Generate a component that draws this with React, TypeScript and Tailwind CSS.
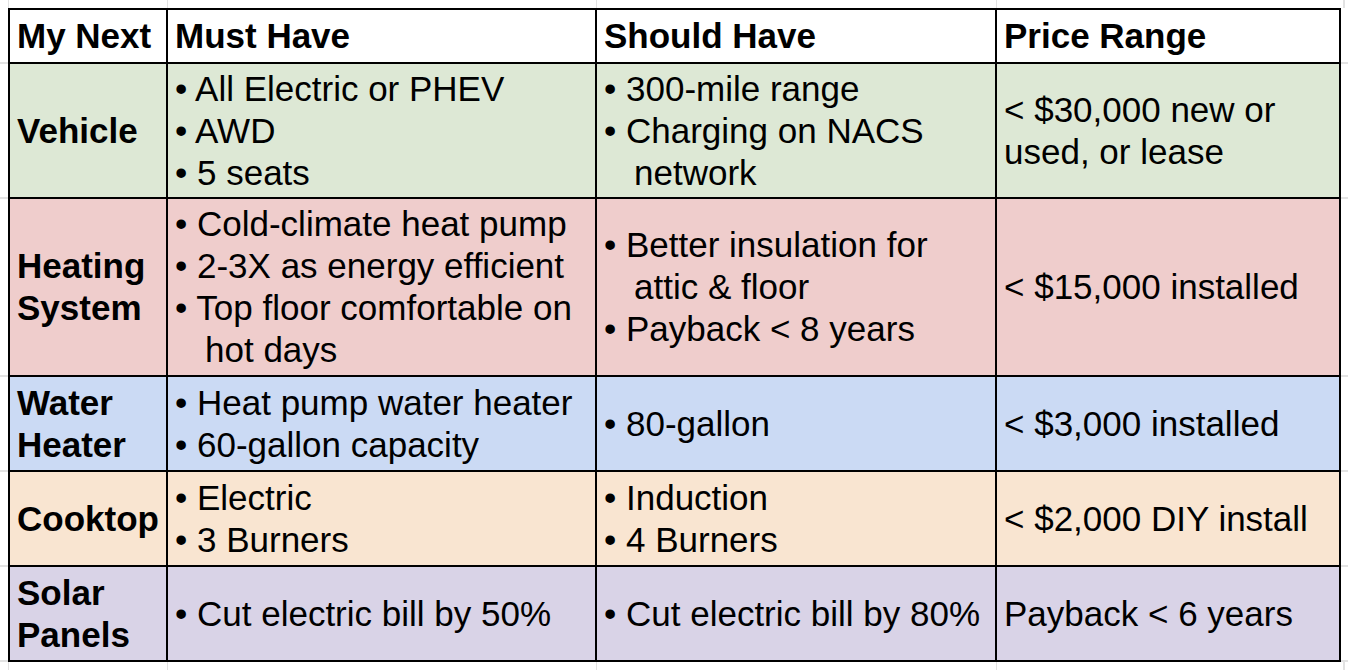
import React from 'react';

type Row = {
  name: string[];
  bg: string;
  must: string[][];
  should: string[][];
  price: string[];
  h: string;
};

// each bullet is a list of lines; lines after the first are wrapped and indented
const rows: Row[] = [
  {
    name: ['Vehicle'],
    bg: 'bg-[#dde8d5]',
    must: [['All Electric or PHEV'], ['AWD'], ['5 seats']],
    should: [['300-mile range'], ['Charging on NACS', 'network']],
    price: ['< $30,000 new or', 'used, or lease'],
    h: 'h-[135px]',
  },
  {
    name: ['Heating', 'System'],
    bg: 'bg-[#efcdcc]',
    must: [['Cold-climate heat pump'], ['2-3X as energy efficient'], ['Top floor comfortable on', 'hot days']],
    should: [['Better insulation for', 'attic & floor'], ['Payback < 8 years']],
    price: ['< $15,000 installed'],
    h: 'h-[178px]',
  },
  {
    name: ['Water', 'Heater'],
    bg: 'bg-[#cbdaf4]',
    must: [['Heat pump water heater'], ['60-gallon capacity']],
    should: [['80-gallon']],
    price: ['< $3,000 installed'],
    h: 'h-[95px]',
  },
  {
    name: ['Cooktop'],
    bg: 'bg-[#f9e5d1]',
    must: [['Electric'], ['3 Burners']],
    should: [['Induction'], ['4 Burners']],
    price: ['< $2,000 DIY install'],
    h: 'h-[95px]',
  },
  {
    name: ['Solar', 'Panels'],
    bg: 'bg-[#d9d3e7]',
    must: [['Cut electric bill by 50%']],
    should: [['Cut electric bill by 80%']],
    price: ['Payback < 6 years'],
    h: 'h-[95px]',
  },
];

const cell = 'flex flex-col justify-center border-r-2 border-b-2 border-black px-[7px]';
const stripRows = ['h-[56px]', 'h-[135px]', 'h-[178px]', 'h-[95px]', 'h-[95px]', 'h-[95px]'];

function Bullets({ items }: { items: string[][] }) {
  return (
    <>
      {items.map((lines, i) => (
        <div key={i}>
          {lines.map((l, j) =>
            j === 0 ? (
              <div key={j} className="whitespace-nowrap">• {l}</div>
            ) : (
              <div key={j} className="whitespace-nowrap pl-[30px]">{l}</div>
            )
          )}
        </div>
      ))}
    </>
  );
}

// faint sheet gridlines around the table
function ColStrip({ h }: { h: string }) {
  return (
    <div className={`flex ${h}`}>
      <div className="w-2 shrink-0" />
      <div className="w-[159px] shrink-0 border-l border-[#e2e2e2]" />
      <div className="w-[429px] shrink-0 border-l border-[#e2e2e2]" />
      <div className="w-[400px] shrink-0 border-l border-[#e2e2e2]" />
      <div className="w-[347px] shrink-0 border-l border-[#e2e2e2]" />
      <div className="flex-1 border-l-2 border-[#e2e2e2]" />
    </div>
  );
}

function RowStrip({ w }: { w: string }) {
  return (
    <div className={`flex flex-col ${w}`}>
      {stripRows.map((h, i) => (
        <div key={i} className={`${h} border-b-2 border-[#e2e2e2]`} />
      ))}
    </div>
  );
}

export default function App() {
  return (
    <div className="flex h-[670px] flex-col overflow-hidden bg-white text-black" style={{ fontFamily: '"Liberation Sans", Arial, sans-serif' }}>
      <ColStrip h="h-2 shrink-0" />
      <div className="flex shrink-0">
        <RowStrip w="w-2 shrink-0" />
        <div className="grid w-[1333px] shrink-0 grid-cols-[158px_429px_400px_344px] border-l-2 border-t-2 border-black text-[35px] leading-[42px]">
          <div className={`${cell} h-[54px] bg-white font-bold`}>My Next</div>
          <div className={`${cell} h-[54px] bg-white font-bold`}>Must Have</div>
          <div className={`${cell} h-[54px] bg-white font-bold`}>Should Have</div>
          <div className={`${cell} h-[54px] bg-white font-bold`}>Price Range</div>

          {rows.map((r) => (
            <React.Fragment key={r.name.join(' ')}>
              <div className={`${cell} ${r.h} ${r.bg} font-bold`}>
                {r.name.map((n) => (
                  <div key={n}>{n}</div>
                ))}
              </div>
              <div className={`${cell} ${r.h} ${r.bg}`}>
                <Bullets items={r.must} />
              </div>
              <div className={`${cell} ${r.h} ${r.bg}`}>
                <Bullets items={r.should} />
              </div>
              <div className={`${cell} ${r.h} ${r.bg}`}>
                {r.price.map((p) => (
                  <div key={p} className="whitespace-nowrap">{p}</div>
                ))}
              </div>
            </React.Fragment>
          ))}
        </div>
        <RowStrip w="flex-1" />
      </div>
      <ColStrip h="flex-1" />
    </div>
  );
}
